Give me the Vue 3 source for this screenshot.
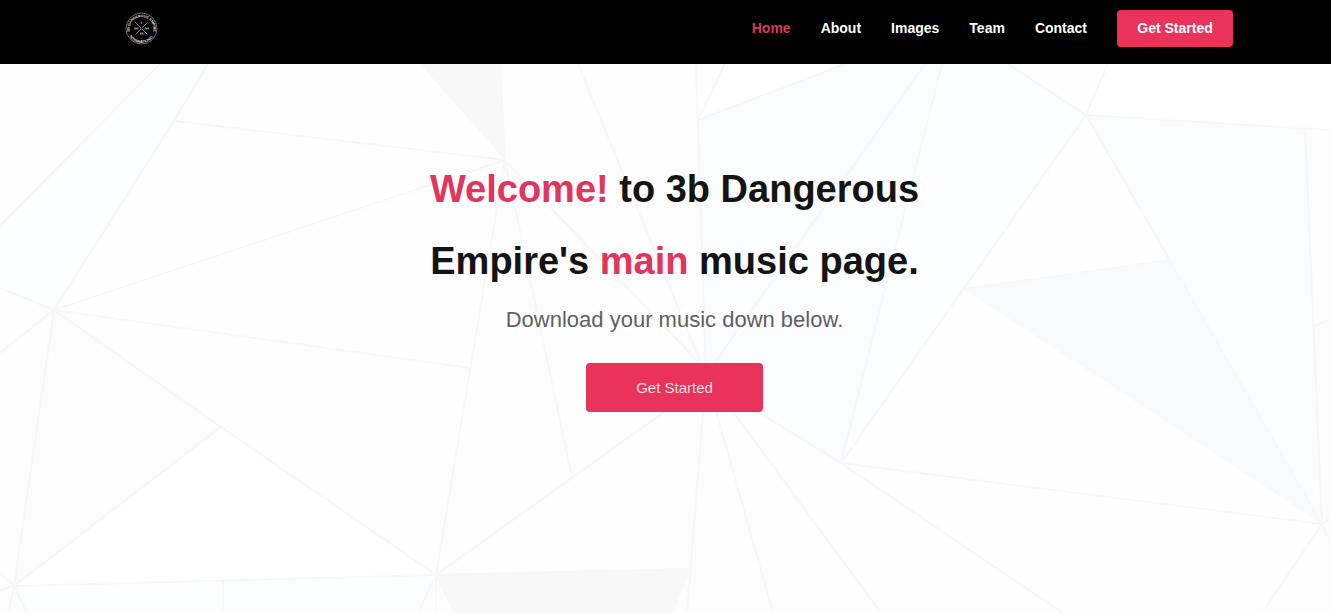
<script setup>
const links = [
  { label: 'Home', href: '#home', active: true },
  { label: 'About', href: '#about' },
  { label: 'Images', href: '#images' },
  { label: 'Team', href: '#team' },
  { label: 'Contact', href: '#contact' },
]

const facets = [
  { points: '0,64 160,64 0,226', fill: '#fdfdfd' },
  { points: '160,64 208,64 54,310 0,288 0,226', fill: '#fcfdfe' },
  { points: '208,64 420,64 505,160 174,121', fill: '#fefefe' },
  { points: '174,121 505,160 54,310', fill: '#fefefe' },
  { points: '54,310 505,160 470,368', fill: '#fefefe' },
  { points: '54,310 470,368 436,575 221,427', fill: '#fdfdfd' },
  { points: '54,310 221,427 14,586', fill: '#fcfcfd' },
  { points: '221,427 436,575 14,586', fill: '#ffffff' },
  { points: '14,586 436,575 418,613 27,613', fill: '#fcfdfe' },
  { points: '420,64 500,64 505,160', fill: '#f8f8f9' },
  { points: '698,120 845,64 925,64 706,375', fill: '#fbfcfd' },
  { points: '725,64 845,64 698,120', fill: '#ffffff' },
  { points: '925,64 942,64 841,463 706,375', fill: '#fbfcfd' },
  { points: '942,64 1008,64 1086,115 841,463', fill: '#fcfdfe' },
  { points: '1108,64 1331,64 1331,130 1086,115', fill: '#ffffff' },
  { points: '1086,115 1170,260 964,289', fill: '#fefefe' },
  { points: '1086,115 1305,128 1322,524', fill: '#fbfcfd' },
  { points: '964,289 1322,524 841,463', fill: '#fefefe' },
  { points: '964,289 1170,260 1322,524', fill: '#f8f9fa' },
  { points: '841,463 1322,524 1262,613 1063,613', fill: '#fefefe' },
  { points: '438,576 690,569 673,613 456,613', fill: '#f8f8f9' },
]

const edges = [
  'M160 64L0 226',
  'M208 64L174 121L54 310',
  'M174 121L505 160',
  'M505 160L54 310L470 368',
  'M0 288L54 310L0 353',
  'M54 310L14 586L221 427',
  'M54 310L221 427L436 575',
  'M14 586L436 575L689 569',
  'M223 580V613',
  'M0 573L14 586L0 590',
  'M8 613L14 586L27 613',
  'M418 613L436 575V613',
  'M436 575L455 613',
  'M500 64L505 160L436 575L706 382',
  'M505 160L571 473',
  'M505 160L706 370',
  'M578 64L706 375',
  'M696 64L706 375L687 613',
  'M725 64L698 120L845 64',
  'M925 64L706 375',
  'M942 64L841 463L706 380',
  'M706 375L773 613',
  'M706 375L881 613',
  'M1063 613L841 463L1086 115L1108 64',
  'M1008 64L1086 115L1331 130',
  'M1086 115L1322 524L841 463',
  'M964 289L1170 260',
  'M1305 128L1322 524L1262 613',
  'M1314 326L1331 319',
  'M1331 517L1322 524L1331 543',
]
</script>

<template>
  <div class="page">
    <header class="bar">
      <a class="brand" href="#home" aria-label="3B Dangerous Empire International">
        <svg class="logo" viewBox="0 0 66 66" aria-hidden="true">
          <defs>
            <path id="arc-top" d="M10 41A24 24 0 1 1 56 41" />
            <path id="arc-bottom" d="M5 34A28 28 0 0 0 61 34" />
          </defs>
          <circle class="ring" cx="33" cy="33" r="31" />
          <text class="seal"><textPath href="#arc-top" startOffset="50%">3B DANGEROUS EMPIRE</textPath></text>
          <text class="seal"><textPath href="#arc-bottom" startOffset="50%">INTERNATIONAL</textPath></text>
          <path class="cross" d="M21 21L45 45M45 21L21 45" />
          <path class="marks" d="M18 33H27M39 33H48M30 43H37M32 22H34" />
        </svg>
      </a>
      <nav class="menu" aria-label="Main">
        <a
          v-for="link in links"
          :key="link.label"
          class="link"
          :class="{ active: link.active }"
          :href="link.href"
        >{{ link.label }}</a>
        <a class="start" href="#about">Get Started</a>
      </nav>
    </header>

    <main id="home" class="hero">
      <svg class="backdrop" viewBox="0 64 1331 549" preserveAspectRatio="xMidYMid slice" aria-hidden="true">
        <polygon v-for="facet in facets" :key="facet.points" :points="facet.points" :fill="facet.fill" />
        <path v-for="edge in edges" :key="edge" class="edge" :d="edge" />
      </svg>
      <div class="intro">
        <h1>
          <span class="line"><em>Welcome!</em> <span>to 3b Dangerous</span></span>
          <span class="line"><span>Empire's</span> <em>main</em> <span>music page.</span></span>
        </h1>
        <p>Download your music down below.</p>
        <a class="cta" href="#about">Get Started</a>
      </div>
    </main>
  </div>
</template>

<style>
body {
  margin: 0;
  background: #fdfdfe;
}
</style>

<style scoped>
.page {
  display: flex;
  flex-direction: column;
  min-height: 100vh;
  font-family: "Liberation Sans", Arial, sans-serif;
}

.bar {
  display: flex;
  align-items: center;
  justify-content: space-between;
  box-sizing: border-box;
  min-height: 64px;
  padding: 10px 98px 17px 125px;
  background: #000;
}

.brand,
.logo {
  display: block;
}

.logo {
  width: 33px;
  height: 33px;
}

.ring {
  fill: none;
  stroke: #6e6e6e;
  stroke-width: 2;
}

.seal {
  fill: #e4e4e4;
  font-size: 7px;
  font-weight: 700;
  text-anchor: middle;
}

.cross {
  fill: none;
  stroke: #888;
  stroke-width: 2;
}

.marks {
  fill: none;
  stroke: #777;
  stroke-width: 4;
}

.menu {
  display: flex;
  align-items: center;
  gap: 30px;
  font-size: 14px;
  font-weight: 700;
  line-height: 17px;
}

.link {
  color: #fff;
  text-decoration: none;
}

.link.active {
  color: #d93a59;
}

.start {
  box-sizing: border-box;
  min-width: 116px;
  padding: 10px 20px;
  border-radius: 4px;
  background: #ea335a;
  color: #fff;
  text-align: center;
  text-decoration: none;
}

.hero {
  position: relative;
  display: flex;
  flex: 1;
  justify-content: center;
  padding: 89px 0 40px 18px;
  overflow: hidden;
}

.backdrop {
  position: absolute;
  inset: 0;
  width: 100%;
  height: 100%;
}

.edge {
  fill: none;
  stroke: #f7f7f9;
  stroke-width: 2;
}

.intro {
  position: relative;
  display: flex;
  flex-direction: column;
  align-items: center;
  max-width: 550px;
  text-align: center;
}

h1 {
  margin: 0;
  color: #141414;
  font-size: 38px;
  font-weight: 700;
  line-height: 72px;
}

.line {
  display: block;
}

em {
  color: #e0355d;
  font-style: normal;
}

p {
  margin: 8px 0 28px;
  color: #5f5f62;
  font-size: 22px;
  line-height: 30px;
}

.cta {
  padding: 16px 50px;
  border-radius: 4px;
  background: #ea335a;
  color: #fbdde4;
  font-size: 15px;
  line-height: 17px;
  text-decoration: none;
}
</style>
